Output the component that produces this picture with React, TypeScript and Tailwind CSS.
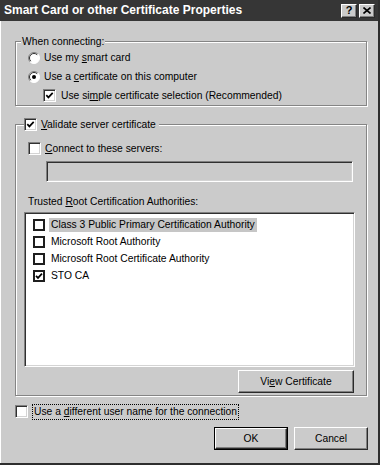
import React from 'react';

const font = "font-['Liberation_Sans',Arial,sans-serif]";

function Check() {
  return (
    <svg width="9" height="9" viewBox="0 0 9 9" className="block">
      <path d="M1.3 4.2 L3.4 6.4 L7.7 1.9" stroke="#000" strokeWidth="1.7" fill="none" />
    </svg>
  );
}

function Checkbox({ checked = false }: { checked?: boolean }) {
  return (
    <div className="w-[13px] h-[13px] shrink-0 bg-white border border-t-[#808080] border-l-[#808080] border-b-white border-r-white shadow-[inset_1px_1px_0_#303030,inset_-1px_-1px_0_#d4d4d4] flex items-center justify-center">
      {checked && <Check />}
    </div>
  );
}

function ListCheckbox({ checked = false }: { checked?: boolean }) {
  return (
    <div className="w-[12px] h-[12px] shrink-0 bg-white border-2 border-[#1e1e1e] flex items-center justify-center">
      {checked && (
        <svg width="8" height="8" viewBox="0 0 8 8" className="block">
          <path d="M1 3.8 L3 5.9 L7 1.6" stroke="#000" strokeWidth="1.7" fill="none" />
        </svg>
      )}
    </div>
  );
}

function Radio({ selected = false }: { selected?: boolean }) {
  return (
    <svg width="12" height="12" viewBox="0 0 12 12" className="block shrink-0">
      <circle cx="6" cy="6" r="5.5" fill="#fff" />
      <path d="M2.11 9.89 A5.5 5.5 0 0 1 9.89 2.11" stroke="#808080" strokeWidth="1" fill="none" />
      <path d="M2.8 9.2 A4.5 4.5 0 0 1 9.2 2.8" stroke="#303030" strokeWidth="1" fill="none" />
      <path d="M9.89 2.11 A5.5 5.5 0 0 1 2.11 9.89" stroke="#ffffff" strokeWidth="1" fill="none" />
      {selected && <circle cx="6" cy="6" r="2" fill="#000" />}
    </svg>
  );
}

function RaisedButton({ children, className = '' }: { children: React.ReactNode; className?: string }) {
  return (
    <div
      className={`flex items-center justify-center bg-[#cbcbcb] border border-t-white border-l-white border-r-[#2a2a2a] border-b-[#2a2a2a] shadow-[inset_-1px_-1px_0_#808080] text-black ${className}`}
    >
      {children}
    </div>
  );
}

function GroupBox({
  legend,
  className = '',
  children,
}: {
  legend: React.ReactNode;
  className?: string;
  children: React.ReactNode;
}) {
  return (
    <div
      className={`relative w-[352px] border border-[#858585] shadow-[inset_1px_1px_0_#fff,1px_1px_0_#fff] ${className}`}
    >
      {legend}
      {children}
    </div>
  );
}

export default function App() {
  return (
    <div
      className={`${font} w-[380px] h-[465px] bg-[#cbcbcb] text-[10.3px] leading-[13px] text-black flex flex-col border-r-2 border-b-2 border-[#2e2e2e] overflow-hidden`}
    >
      {/* Title bar */}
      <div className="h-[21px] shrink-0 bg-[#363636] flex items-center justify-between pl-[4px] pr-[3px]">
        <span className="text-white font-bold text-[12px]">
          Smart Card or other Certificate Properties
        </span>
        <div className="flex items-center gap-[2px]">
          <RaisedButton className="w-[16px] h-[14px] font-bold text-[11px] leading-none">?</RaisedButton>
          <RaisedButton className="w-[16px] h-[14px]">
            <svg width="8" height="7" viewBox="0 0 8 7" className="block">
              <path d="M0.5 0.5 L7.5 6.5 M7.5 0.5 L0.5 6.5" stroke="#000" strokeWidth="1.6" />
            </svg>
          </RaisedButton>
        </div>
      </div>

      {/* Body */}
      <div className="flex flex-col flex-1 pl-[14px] border-l border-white">
        <GroupBox
          className="mt-[20px] h-[65px] pt-[6px]"
          legend={
            <span className="absolute left-[5px] top-[-7px] bg-[#cbcbcb] px-[1px] leading-[13px]">
              When connecting:
            </span>
          }
        >
          <div className="h-[19px] flex items-center pl-[12px] gap-[4px]">
            <Radio />
            <span>
              Use my <u>s</u>mart card
            </span>
          </div>
          <div className="h-[19px] flex items-center pl-[12px] gap-[4px]">
            <Radio selected />
            <span>
              Use a <u>c</u>ertificate on this computer
            </span>
          </div>
          <div className="h-[19px] flex items-center pl-[27px] gap-[5px]">
            <Checkbox checked />
            <span>
              Use si<u>m</u>ple certificate selection (Recommended)
            </span>
          </div>
        </GroupBox>

        <GroupBox
          className="mt-[18px] h-[272px] pt-[14px] flex flex-col"
          legend={
            <div className="absolute left-[8px] top-[-7px] bg-[#cbcbcb] pr-[3px] flex items-center gap-[4px] h-[13px]">
              <Checkbox checked />
              <span>
                <u>V</u>alidate server certificate
              </span>
            </div>
          }
        >
          <div className="h-[19px] flex items-center pl-[12px] gap-[4px]">
            <Checkbox />
            <span>
              <u>C</u>onnect to these servers:
            </span>
          </div>
          <div className="ml-[30px] mt-[3px] w-[307px] h-[21px] shrink-0 bg-[#cbcbcb] border border-t-[#808080] border-l-[#808080] border-b-white border-r-white shadow-[inset_1px_1px_0_#303030,inset_-1px_-1px_0_#d4d4d4]" />
          <div className="ml-[12px] mt-[13px] h-[13px]">
            Trusted <u>R</u>oot Certification Authorities:
          </div>
          <div className="ml-[8px] mt-[4px] w-[331px] h-[155px] shrink-0 bg-white border border-t-[#808080] border-l-[#808080] border-b-white border-r-white shadow-[inset_1px_1px_0_#303030,inset_-1px_-1px_0_#d4d4d4] pt-[3px] pl-[8px]">
            {[
              { name: 'Class 3 Public Primary Certification Authority', checked: false, sel: true },
              { name: 'Microsoft Root Authority', checked: false, sel: false },
              { name: 'Microsoft Root Certificate Authority', checked: false, sel: false },
              { name: 'STO CA', checked: true, sel: false },
            ].map((item) => (
              <div key={item.name} className="h-[17px] flex items-center">
                <ListCheckbox checked={item.checked} />
                <span
                  className={`ml-[4px] px-[2px] h-[14px] flex items-center ${item.sel ? 'bg-[#c6c6c6]' : ''}`}
                >
                  {item.name}
                </span>
              </div>
            ))}
          </div>
          <RaisedButton className="self-end mr-[12px] mt-[3px] w-[116px] h-[23px] shrink-0">
            <span>
              Vi<u>e</u>w Certificate
            </span>
          </RaisedButton>
        </GroupBox>

        <div className="mt-[6px] h-[19px] flex items-center">
          <Checkbox />
          <span className="ml-[4px] px-[1px] border border-dotted border-black leading-[14px]">
            Use a <u>d</u>ifferent user name for the connection
          </span>
        </div>

        <div className="mt-[6px] flex gap-[6px] ml-[199px]">
          <div className="w-[74px] h-[23px] border border-black">
            <RaisedButton className="w-full h-full">OK</RaisedButton>
          </div>
          <RaisedButton className="w-[74px] h-[23px]">Cancel</RaisedButton>
        </div>
      </div>
    </div>
  );
}
